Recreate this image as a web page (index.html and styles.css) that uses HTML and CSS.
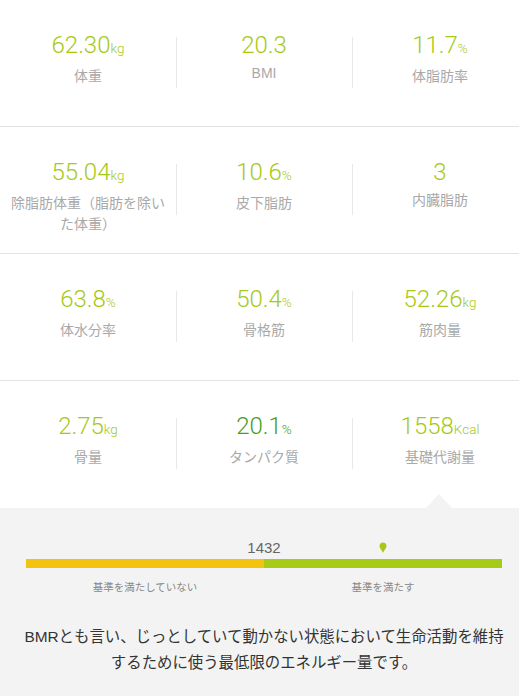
FILE: index.html
```html
<!DOCTYPE html>
<html lang="ja">
    <head>
        <meta charset="utf-8">
        <title>体組成</title>
        <meta name="viewport" content="width=device-width, initial-scale=1">
        <link rel="stylesheet" href="styles.css">
    </head>

    <body>
        <div class="page">
            <div class="stats">
                <div class="row">
                    <div class="cell">
                        <div class="value">62.30<span class="unit">kg</span></div>
                        <div class="label">体重</div>
                    </div>
                    <div class="cell">
                        <div class="value">20.3</div>
                        <div class="label">BMI</div>
                    </div>
                    <div class="cell">
                        <div class="value">11.7<span class="unit">%</span></div>
                        <div class="label">体脂肪率</div>
                    </div>
                </div>

                <div class="row">
                    <div class="cell">
                        <div class="value">55.04<span class="unit">kg</span></div>
                        <div class="label">除脂肪体重（脂肪を除いた体重）</div>
                    </div>
                    <div class="cell">
                        <div class="value">10.6<span class="unit">%</span></div>
                        <div class="label">皮下脂肪</div>
                    </div>
                    <div class="cell">
                        <div class="value">3</div>
                        <div class="label">内臓脂肪</div>
                    </div>
                </div>

                <div class="row">
                    <div class="cell">
                        <div class="value">63.8<span class="unit">%</span></div>
                        <div class="label">体水分率</div>
                    </div>
                    <div class="cell">
                        <div class="value">50.4<span class="unit">%</span></div>
                        <div class="label">骨格筋</div>
                    </div>
                    <div class="cell">
                        <div class="value">52.26<span class="unit">kg</span></div>
                        <div class="label">筋肉量</div>
                    </div>
                </div>

                <div class="row last">
                    <div class="cell">
                        <div class="value">2.75<span class="unit">kg</span></div>
                        <div class="label">骨量</div>
                    </div>
                    <div class="cell">
                        <div class="value dark">20.1<span class="unit">%</span></div>
                        <div class="label">タンパク質</div>
                    </div>
                    <div class="cell">
                        <div class="value">1558<span class="unit">Kcal</span></div>
                        <div class="label">基礎代謝量</div>
                    </div>
                </div>
            </div>

            <div class="detail">
                <div class="scale">
                    <div class="scale-top">
                        <span class="threshold">1432</span>
                        <svg class="pin" width="8" height="11" viewBox="0 0 8 11">
                            <path d="M4 0.5C6 0.5 7.5 2 7.5 4C7.5 6 5.5 8 4 10.8C2.5 8 0.5 6 0.5 4C0.5 2 2 0.5 4 0.5Z" fill="#a6c916"/>
                        </svg>
                    </div>
                    <div class="bar">
                        <div class="bar-low"></div>
                        <div class="bar-ok"></div>
                    </div>
                    <div class="scale-labels">
                        <span>基準を満たしていない</span>
                        <span>基準を満たす</span>
                    </div>
                </div>

                <p class="desc">BMRとも言い、じっとしていて動かない状態において生命活動を維持するために使う最低限のエネルギー量です。</p>
            </div>
        </div>
    </body>
</html>
```

FILE: styles.css
```css
html, body {
    margin: 0;
    padding: 0;
    background: #f3f3f3;
    overflow: hidden;
}

body {
    font-family: "Liberation Sans", "Noto Sans CJK JP", sans-serif;
}

.page {
    width: 528px;
}

.stats {
    background: #ffffff;
}

.row {
    display: grid;
    grid-template-columns: repeat(3, 176px);
    height: 127px;
    box-sizing: border-box;
    border-bottom: 1px solid #e3e3e3;
}

.row.last {
    border-bottom: none;
}

.cell {
    position: relative;
    padding: 33px 8px 0 8px;
    text-align: center;
}

.cell + .cell::before {
    content: "";
    position: absolute;
    left: 0;
    top: 37px;
    width: 1px;
    height: 51px;
    background: #e8e8e8;
}

.value {
    font-family: Roboto, "Liberation Sans", sans-serif;
    font-weight: 300;
    font-size: 24px;
    line-height: 24px;
    color: #a6c916;
}

.value.dark {
    color: #43a01a;
}

.unit {
    font-size: 13.5px;
}

.label {
    margin-top: 6px;
    font-size: 14px;
    line-height: 21px;
    color: #a9a9a9;
}

.detail {
    position: relative;
    background: #f3f3f3;
    height: 188px;
}

.detail::before {
    content: "";
    position: absolute;
    left: 426px;
    top: -14px;
    border-left: 13px solid transparent;
    border-right: 13px solid transparent;
    border-bottom: 14px solid #f3f3f3;
}

.scale {
    margin: 0 26px;
    padding-top: 31px;
}

.scale-top {
    position: relative;
    height: 20px;
}

.threshold {
    position: absolute;
    left: 50%;
    bottom: 3px;
    transform: translateX(-50%);
    font-size: 15px;
    line-height: 16px;
    color: #666666;
}

.pin {
    position: absolute;
    left: 75%;
    bottom: 6px;
    margin-left: -4px;
    display: block;
}

.bar {
    display: flex;
    height: 9px;
}

.bar-low {
    flex: 1;
    background: #f2c40f;
}

.bar-ok {
    flex: 1;
    background: #a8cb17;
}

.scale-labels {
    display: grid;
    grid-template-columns: 1fr 1fr;
    margin-top: 12px;
    font-size: 10.5px;
    line-height: 14px;
    color: #888888;
    text-align: center;
}

.desc {
    margin: 30px 0 0 0;
    padding: 0 19px;
    font-size: 15.4px;
    line-height: 26px;
    color: #333333;
    text-align: center;
}
```
